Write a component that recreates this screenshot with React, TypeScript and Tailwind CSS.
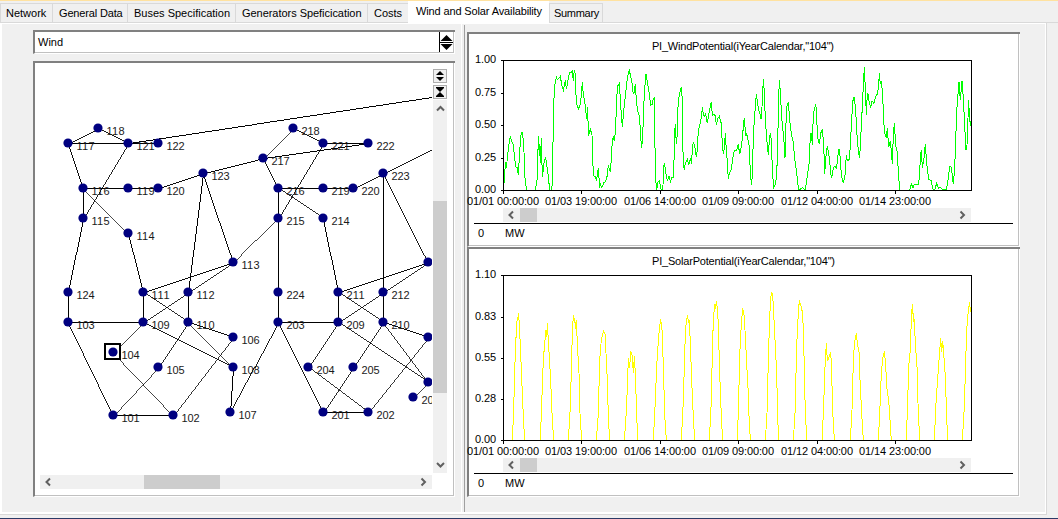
import React from "react";

type Point = [number, number];

const FONT = "font-['Liberation_Sans',Arial,sans-serif]";

/* ---------- network data ---------- */

const nodes: Record<string, Point> = {
  "101": [113, 415], "102": [173, 415], "103": [68, 322], "104": [113, 352],
  "105": [158, 367], "106": [233, 337], "107": [230, 412], "108": [233, 367],
  "109": [143, 322], "110": [188, 322], "111": [143, 292], "112": [188, 292],
  "113": [233, 262], "114": [128, 233], "115": [83, 218], "116": [83, 188],
  "117": [68, 143], "118": [98, 128], "119": [128, 188], "120": [158, 188],
  "121": [128, 143], "122": [158, 143], "123": [203, 173], "124": [68, 292],
  "201": [323, 412], "202": [368, 412], "203": [278, 322], "204": [308, 367],
  "205": [353, 367], "206": [428, 337], "207": [413, 397], "208": [428, 382],
  "209": [338, 322], "210": [383, 322], "211": [338, 292], "212": [383, 292],
  "213": [428, 262], "214": [323, 218], "215": [278, 218], "216": [278, 188],
  "217": [263, 158], "218": [293, 128], "219": [323, 188], "220": [353, 188],
  "221": [323, 143], "222": [368, 143], "223": [383, 173], "224": [278, 292],
  "318": [443, 143], "325": [458, 93],
};

const edges = (
  "118-117 118-121 117-121 121-122 117-116 121-115 121-325 116-115 116-119 119-120 120-123 116-114 " +
  "115-124 114-111 123-112 123-113 123-217 113-111 113-112 113-215 111-109 111-110 112-109 112-110 " +
  "124-103 103-109 103-101 109-104 109-108 110-106 110-108 110-105 104-102 105-101 101-102 106-102 " +
  "108-107 107-203 218-217 218-221 221-222 217-222 217-216 221-215 216-215 216-219 219-220 220-223 " +
  "216-214 215-224 214-211 223-212 223-213 223-318 213-211 213-212 211-209 211-210 212-209 212-210 " +
  "224-203 203-209 203-201 209-204 209-208 210-206 210-208 210-205 204-202 205-201 201-202 206-202 208-207"
)
  .split(" ")
  .map((e) => e.split("-"));

/* Stroke width that covers exactly one pixel per step along the line's major axis. */
function stepWidth([x1, y1]: Point, [x2, y2]: Point): number {
  const dx = Math.abs(x2 - x1);
  const dy = Math.abs(y2 - y1);
  return Math.max(dx, dy) / Math.hypot(dx, dy);
}

/* ---------- series data: flat x,y lists in thirds of a pixel ---------- */

function series(dx: number, dy: number, flat: number[]): string {
  const out: string[] = [];
  for (let i = 0; i < flat.length; i += 2) {
    out.push(`${((flat[i] + dx) / 3).toFixed(2)},${((flat[i + 1] + dy) / 3).toFixed(2)}`);
  }
  return out.join(" ");
}

const wind = [
  series(-9, -15, [
    13, 383, 16, 322, 19, 340, 24, 290, 28, 258, 31, 245, 35, 258, 40, 268, 44, 310, 48, 337, 52, 338, 55, 360,
    59, 290, 63, 240, 67, 230, 71, 265, 75, 370, 80, 407, 106, 407, 112, 368, 115, 242, 118, 303, 119, 267,
    121, 325, 124, 250, 127, 367, 130, 345, 133, 315, 137, 308, 141, 335, 145, 363, 149, 407, 153, 407, 157, 390,
    158, 335, 160, 195, 163, 100, 166, 80, 169, 67, 172, 74, 176, 70, 181, 64, 184, 82, 187, 97, 190, 105,
    193, 90, 196, 76, 199, 102, 203, 82, 206, 62, 210, 52, 215, 52, 217, 46, 220, 78, 223, 45, 226, 60,
    229, 148, 232, 152, 236, 163, 241, 148, 244, 120, 247, 82, 250, 120, 254, 140, 257, 165, 260, 192, 262, 155,
    266, 242, 271, 222, 276, 240, 278, 318, 281, 362, 286, 366, 290, 375, 293, 350, 295, 338, 299, 400, 301, 385,
    304, 397, 308, 392, 312, 382, 317, 380, 321, 365, 325, 330, 328, 345, 331, 348, 334, 312, 337, 255, 340, 246,
    343, 258, 346, 230, 349, 165, 352, 95, 358, 86, 361, 130, 364, 180, 367, 215, 370, 180, 373, 150, 377, 115,
    380, 85, 385, 55, 388, 46, 392, 65, 396, 85, 400, 118, 403, 110, 406, 87, 409, 135, 413, 168, 419, 185,
    421, 235, 425, 280, 428, 245, 431, 160, 434, 100, 438, 58, 443, 85, 448, 118, 452, 150, 457, 148, 460, 130,
    463, 128, 464, 230, 467, 375, 470, 405,
  ]),
  series(441, -15, [
    20, 405, 24, 382, 28, 377, 31, 392, 34, 407, 37, 407, 39, 390, 41, 340, 43, 323, 47, 350, 52, 378, 57, 363,
    61, 380, 65, 368, 70, 367, 73, 290, 74, 235, 76, 207, 79, 268, 82, 235, 83, 170, 86, 132, 91, 105, 94, 95,
    97, 135, 98, 250, 100, 330, 103, 345, 106, 325, 112, 313, 116, 330, 122, 308, 124, 328, 127, 285, 130, 260,
    135, 280, 139, 307, 142, 285, 145, 225, 151, 205, 155, 180, 157, 155, 160, 178, 163, 185, 167, 177, 172, 205,
    176, 178, 180, 160, 184, 140, 187, 182, 193, 178, 196, 183, 199, 210, 204, 190, 208, 184, 214, 206, 217, 270,
    220, 298, 223, 280, 226, 235, 229, 285, 232, 320, 235, 373, 238, 355, 244, 342, 250, 298, 253, 288, 260, 285,
    265, 268, 269, 298, 273, 280, 278, 245, 280, 210, 283, 190, 287, 243, 289, 233, 293, 250, 297, 270, 300, 330,
    304, 390, 307, 365, 310, 245, 313, 195, 316, 155, 319, 116, 323, 145, 326, 165, 330, 177, 333, 192, 336, 155,
    340, 73, 343, 110, 346, 195, 350, 250, 355, 300, 358, 258, 361, 233, 364, 255, 367, 345, 371, 397, 375, 390,
    380, 365, 383, 270, 386, 130, 388, 76, 391, 110, 395, 185, 398, 220, 401, 245, 405, 308, 408, 205, 410, 157,
    415, 140, 418, 180, 421, 215, 426, 245, 430, 262, 434, 310, 440, 355, 446, 405, 450, 403, 457, 398, 466, 405,
    472, 362, 478, 320,
  ]),
  series(681, -105, [
    238, 410, 241, 330, 244, 323, 247, 360, 250, 270, 254, 248, 257, 240, 260, 260, 262, 335, 268, 358, 272, 325,
    277, 313, 281, 355, 284, 448, 287, 400, 292, 363, 296, 385, 299, 405, 302, 445, 305, 458, 310, 428, 314, 424,
    320, 430, 323, 395, 327, 373, 331, 400, 334, 450, 340, 475, 345, 450, 349, 390, 352, 408, 358, 403, 361, 360,
    365, 285, 368, 230, 372, 216, 376, 245, 379, 290, 382, 350, 388, 398, 391, 370, 394, 300, 397, 245, 400, 180,
    403, 127, 406, 190, 409, 270, 412, 205, 415, 208, 418, 235, 422, 247, 426, 228, 432, 235, 437, 215, 443, 205,
    446, 180, 448, 145, 451, 178, 454, 168, 458, 210, 461, 285, 464, 325, 469, 338, 472, 310, 476, 365, 481, 348,
    485, 390, 487, 418, 490, 330, 493, 295, 497, 360, 502, 383, 505, 440, 509, 497, 539, 497, 544, 476, 549, 490,
    553, 478, 565, 478, 568, 460, 571, 400, 574, 374, 577, 428, 581, 408, 586, 358, 590, 415, 596, 462, 604, 468,
    608, 490, 614, 497, 620, 474, 625, 490, 631, 488, 640, 494, 649, 494, 654, 465, 659, 424, 664, 427, 670, 478,
    674, 430, 677, 350, 680, 262, 683, 220, 687, 170, 691, 225, 696, 168, 700, 220, 704, 300, 708, 375, 711, 360,
    714, 280, 715, 226, 718, 262, 721, 303,
  ]),
].join(" ");

const solar = [
  series(-129, -105, [
    156, 602, 160, 540, 163, 440, 166, 330, 169, 275, 172, 230, 174, 240, 176, 220, 178, 260, 181, 315, 184, 390,
    187, 460, 190, 530, 194, 602, 241, 602, 244, 520, 247, 440, 250, 360, 254, 310, 258, 270, 260, 290, 262, 250,
    265, 300, 269, 370, 272, 420, 275, 500, 281, 602, 325, 602, 331, 500, 334, 390, 337, 280, 340, 226, 343, 250,
    344, 235, 347, 268, 349, 240, 352, 310, 357, 400, 360, 520, 365, 602, 409, 602, 415, 520, 418, 400, 421, 325,
    426, 290, 431, 273, 436, 285, 438, 340, 442, 420, 445, 530, 449, 602, 493, 602, 500, 500, 503, 400, 506, 355,
    509, 385, 512, 334, 517, 348, 520, 400, 523, 348, 526, 400, 530, 520, 533, 602, 580, 602, 586, 480, 590, 380,
    594, 320, 598, 265, 602, 238, 606, 270, 609, 350, 613, 480, 616, 570, 620, 602, 664, 602, 670, 480, 673, 380,
    676, 280, 679, 242, 683, 226, 685, 248, 688, 240, 691, 310, 695, 420, 700, 530, 704, 602, 748, 602, 754, 480,
    757, 340, 760, 240, 764, 192, 766, 208, 769, 184, 773, 210, 776, 290, 779, 400, 784, 530, 788, 602,
  ]),
  series(681, -105, [
    22, 602, 26, 480, 29, 350, 32, 285, 35, 240, 38, 205, 43, 230, 47, 310, 51, 390, 55, 460, 58, 560, 62, 602,
    106, 602, 111, 520, 114, 400, 118, 260, 121, 190, 124, 157, 128, 162, 131, 220, 136, 320, 140, 400, 143, 530,
    146, 602, 190, 602, 195, 520, 199, 360, 202, 270, 205, 220, 208, 181, 213, 198, 218, 220, 221, 300, 225, 480,
    230, 602, 276, 602, 281, 500, 284, 400, 287, 345, 289, 310, 292, 363, 298, 350, 302, 337, 304, 370, 307, 470,
    310, 560, 314, 602, 361, 602, 366, 510, 369, 400, 372, 330, 376, 290, 379, 283, 383, 315, 388, 340, 390, 420,
    395, 520, 400, 602, 445, 602, 450, 500, 454, 400, 458, 355, 463, 334, 467, 370, 470, 440, 476, 480, 480, 540,
    484, 602, 529, 602, 533, 480, 537, 370, 541, 330, 544, 240, 547, 193, 551, 247, 553, 238, 556, 310, 561, 380,
    564, 490, 569, 602, 613, 602, 618, 490, 622, 430, 626, 375, 629, 335, 632, 295, 635, 335, 638, 302, 641, 340,
    646, 410, 650, 530, 653, 602, 697, 602, 703, 500, 706, 400, 709, 300, 712, 240, 716, 205, 719, 187, 721, 215,
  ]),
].join(" ");

const timeLabels: [number, string][] = [
  [0, "01/01 00:00:00"],
  [78, "01/03 19:00:00"],
  [157, "01/06 14:00:00"],
  [235, "01/09 09:00:00"],
  [314, "01/12 04:00:00"],
  [392, "01/14 23:00:00"],
];

/* ---------- building blocks ---------- */

function Sunken({ className, children }: { className: string; children: React.ReactNode }) {
  return (
    <div className={`flex shrink-0 border-t-2 border-t-[#808080] bg-white ${className}`}>
      <div className="flex min-w-0 flex-1 border-l-2 border-r border-b border-l-[#808080] border-r-white border-b-white">
        <div className="flex min-w-0 flex-1 flex-col border-r border-b border-[#c0c0c0]">{children}</div>
      </div>
    </div>
  );
}

const chevrons = {
  left: "M6 1.5 L2.5 5 L6 8.5",
  right: "M2.5 1.5 L6 5 L2.5 8.5",
  up: "M1 6.5 L4.5 3 L8 6.5",
  down: "M1 3 L4.5 6.5 L8 3",
};

function Chevron({ dir }: { dir: keyof typeof chevrons }) {
  return (
    <svg width="9" height="10" className="shrink-0">
      <path d={chevrons[dir]} fill="none" stroke="#606060" strokeWidth="2" />
    </svg>
  );
}

function ChartScroll() {
  return (
    <div className="ml-[34px] flex h-[14px] w-[468px] shrink-0 items-center bg-[#f0f0f0]">
      <div className="flex w-[17px] justify-center">
        <Chevron dir="left" />
      </div>
      <div className="h-[14px] w-[17px] bg-[#cdcdcd]" />
      <div className="flex-1" />
      <div className="flex w-[17px] justify-center">
        <Chevron dir="right" />
      </div>
    </div>
  );
}

interface ChartProps {
  title: string;
  titleX: number;
  titleWidth: number;
  plotHeight: number;
  ticks: [number, string][];
  points: string;
  color: string;
}

function Chart({ title, titleX, titleWidth, plotHeight, ticks, points, color }: ChartProps) {
  return (
    <>
      <svg width="549" height={plotHeight + 44} className="shrink-0 overflow-visible text-[11px]">
        <text x={titleX} y="16" textLength={titleWidth}>{title}</text>
        <g transform="translate(34 26)">
          <polyline points={points} fill="none" stroke={color} strokeWidth="1" shapeRendering="crispEdges" />
          <rect x="0.5" y="0.5" width="468" height={plotHeight} fill="none" stroke="#000" shapeRendering="crispEdges" />
          {ticks.map(([y, label]) => (
            <g key={label}>
              <rect x="-2" y={y} width="2" height="1" />
              <text x="-28" y={y + 3} textLength="21">{label}</text>
            </g>
          ))}
          {timeLabels.map(([x, label]) => (
            <g key={label}>
              <rect x={x} y={plotHeight + 1} width="1" height="3" />
              <text x={x - 36} y={plotHeight + 15} textLength="72">{label}</text>
            </g>
          ))}
        </g>
      </svg>
      <ChartScroll />
      <div className="mt-px ml-[5px] h-px w-[539px] shrink-0 bg-black" />
      <div className="flex pt-[3px] pl-[9px] leading-[13px]">
        <span className="w-[27px]">0</span>
        <span>MW</span>
      </div>
    </>
  );
}

function Network() {
  return (
    <svg width="395" height="409" viewBox="37 65 395 409" className="overflow-hidden text-[11px]">
      <g stroke="#000" shapeRendering="crispEdges">
        {edges.map(([a, b]) => (
          <line
            key={a + b}
            x1={nodes[a][0] + 0.5}
            y1={nodes[a][1] + 0.5}
            x2={nodes[b][0] + 0.5}
            y2={nodes[b][1] + 0.5}
            strokeWidth={stepWidth(nodes[a], nodes[b])}
          />
        ))}
      </g>
      <rect x="105" y="344" width="15" height="15" fill="#fff" stroke="#000" strokeWidth="2" />
      {Object.entries(nodes).map(([id, [x, y]]) => (
        <g key={id}>
          <circle cx={x} cy={y} r="4.6" fill="#000080" />
          {x < 425 && <text x={x + 8.5} y={y + 7} fill="#1a1a1a" textLength="18">{id}</text>}
        </g>
      ))}
    </svg>
  );
}

const tabs: [string, string, boolean][] = [
  ["Network", "w-[52px] pl-[5px]", false],
  ["General Data", "w-[75px] pl-[6px] tracking-[-0.16px]", false],
  ["Buses Specification", "w-[108px] pl-[6px]", false],
  ["Generators Speficication", "w-[132px] pl-[6px] tracking-[-0.04px]", false],
  ["Costs", "w-[41px] pl-[6px]", false],
  ["Wind and Solar Availability", "w-[141px] pl-[8px] tracking-[-0.13px]", true],
  ["Summary", "w-[54px] pl-[4px] tracking-[-0.3px]", false],
];

export default function App() {
  return (
    <div className={`flex h-[519px] w-[1058px] flex-col overflow-hidden bg-[#f0f0f0] text-[11px] text-black ${FONT}`}>
      <div className="h-px shrink-0 bg-[#ffe2a0]" />
      <div className="flex h-[22px] shrink-0 items-end border-b border-[#d9d9d9]">
        {tabs.map(([label, layout, active]) =>
          active ? (
            <div key={label} className={`-mb-px h-[22px] shrink-0 bg-white pt-[3px] leading-[14px] whitespace-nowrap ${layout}`}>
              {label}
            </div>
          ) : (
            <div key={label} className={`h-[19px] shrink-0 border-t border-l border-[#d9d9d9] pt-[2px] leading-[14px] whitespace-nowrap last:border-r ${layout}`}>
              {label}
            </div>
          ),
        )}
      </div>
      <div className="flex h-[492px] w-[1047px] shrink-0 border-r border-b border-[#d9d9d9]">
        <div className="flex flex-1 border-2 border-t border-r-[1px] border-white">
          <div className="flex w-[460px] shrink-0 flex-col gap-[7px] border-r border-white pt-[6px] pl-[31px]">
            <Sunken className="h-[24px] w-[422px]">
              <div className="flex h-[20px] items-stretch">
                <div className="flex-1 pt-[3px] pl-[3px] leading-[14px]">Wind</div>
                <svg width="14" height="20" className="border-l border-black">
                  <path d="M6.5 3 L12.5 9 H0.5 Z M6.5 18 L12.5 12 H0.5 Z M0 10 H13 V11 H0 Z" />
                </svg>
              </div>
            </Sunken>
            <Sunken className="h-[436px] w-[422px]">
              <div className="flex pt-[2px] pl-[2px]">
                <Network />
                <div className="ml-px flex h-[408px] w-[14px] flex-col items-center gap-[2px] pt-[4px]">
                  <svg width="14" height="14" className="shrink-0 border border-[#adadad] bg-[#f0f0f0]">
                    <path d="M6 1 L10 5 H2 Z M6 11 L10 7 H2 Z" />
                  </svg>
                  <svg width="14" height="14" className="shrink-0 border border-[#adadad] bg-[#f0f0f0]">
                    <path d="M2 1 H10 V2 L6 6 L10 10 V11 H2 V10 L6 6 L2 2 Z" />
                  </svg>
                  <div className="-mt-px flex w-[14px] flex-1 flex-col items-center bg-[#f0f0f0]">
                    <div className="pt-[4px]">
                      <Chevron dir="up" />
                    </div>
                    <div className="mt-[87px] h-[192px] w-[14px] bg-[#cdcdcd]" />
                    <div className="mt-auto pb-[3px]">
                      <Chevron dir="down" />
                    </div>
                  </div>
                </div>
              </div>
              <div className="mt-px ml-[5px] flex h-[14px] w-[392px] items-center bg-[#f0f0f0]">
                <div className="w-[104px] pl-[4px]">
                  <Chevron dir="left" />
                </div>
                <div className="h-[14px] w-[76px] bg-[#cdcdcd]" />
                <div className="ml-auto pr-[4px]">
                  <Chevron dir="right" />
                </div>
              </div>
            </Sunken>
          </div>
          <div className="mt-px mr-[2px] ml-[2px] w-px bg-[#a0a0a0]" />
          <div className="flex flex-col pt-[8px]">
            <Sunken className="h-[215px] w-[553px]">
              <Chart
                title={'PI_WindPotential(iYearCalendar,"104")'}
                titleX={183}
                titleWidth={182}
                plotHeight={130}
                ticks={[[0, "1.00"], [33, "0.75"], [65, "0.50"], [98, "0.25"], [130, "0.00"]]}
                points={wind}
                color="#00ff00"
              />
            </Sunken>
            <Sunken className="h-[250px] w-[553px]">
              <Chart
                title={'PI_SolarPotential(iYearCalendar,"104")'}
                titleX={183}
                titleWidth={183}
                plotHeight={165}
                ticks={[[0, "1.10"], [42, "0.83"], [83, "0.55"], [124, "0.28"], [165, "0.00"]]}
                points={solar}
                color="#ffff00"
              />
            </Sunken>
          </div>
        </div>
      </div>
      <div className="mt-auto h-px shrink-0 bg-[#2b3a66]" />
    </div>
  );
}
